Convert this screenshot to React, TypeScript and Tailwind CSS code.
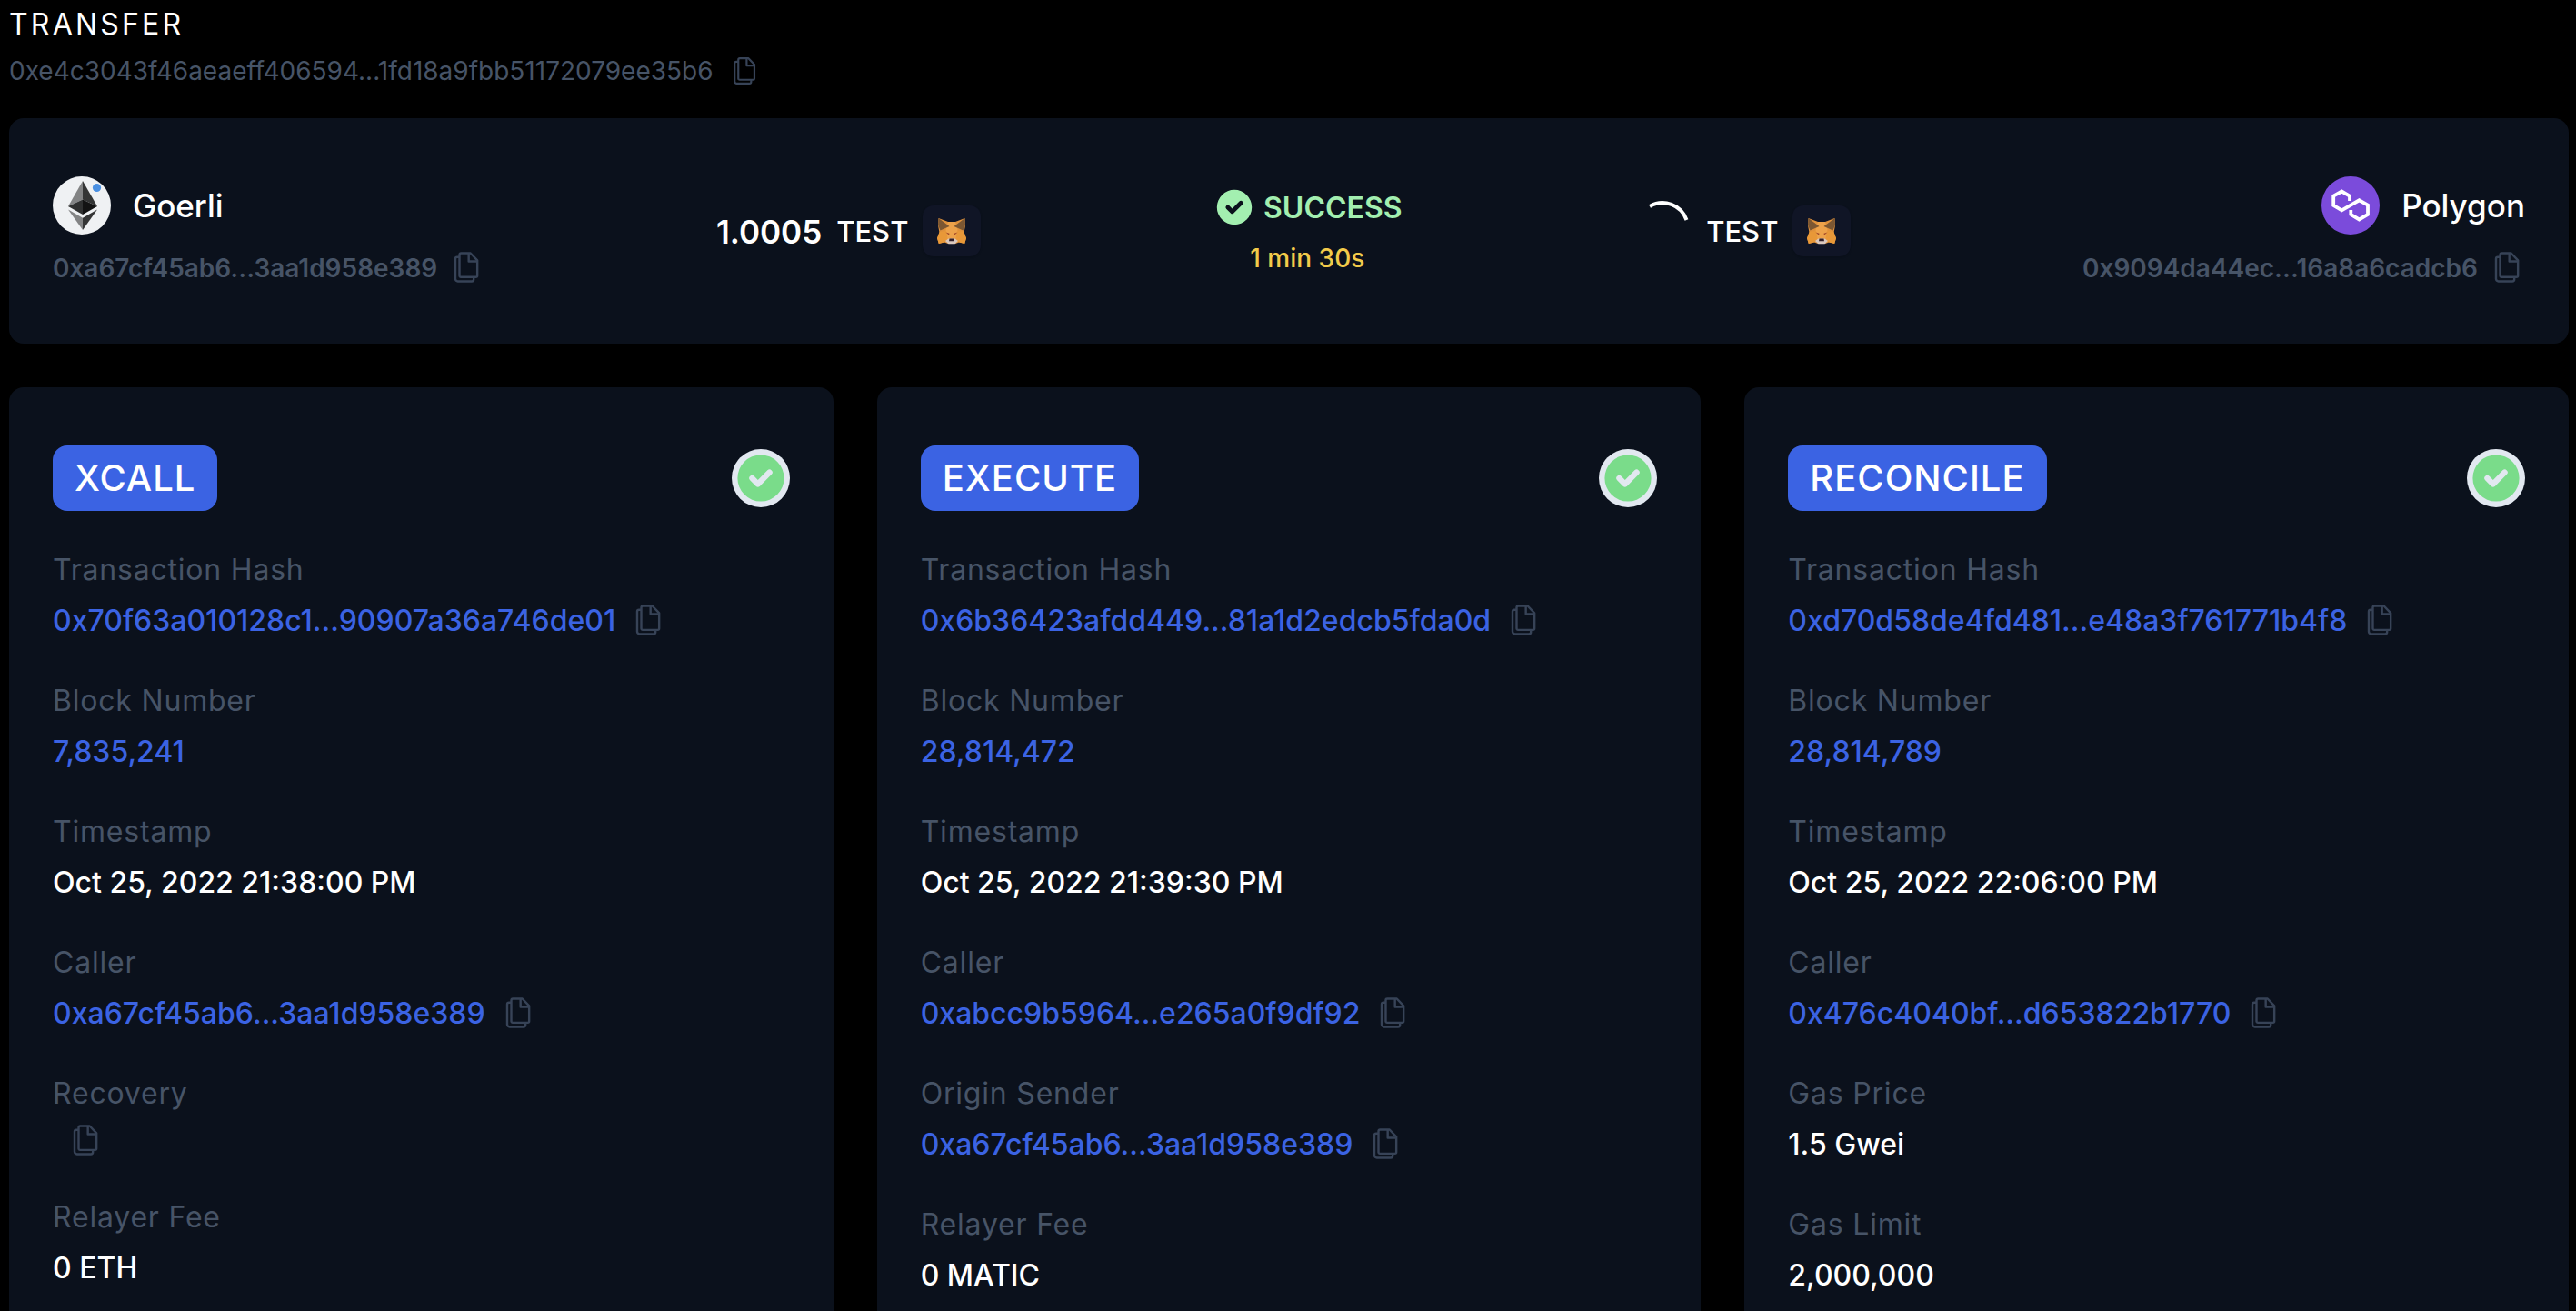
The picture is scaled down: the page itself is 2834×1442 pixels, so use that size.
import { HiCheckCircle } from "react-icons/hi";

type Field = {
  label: string;
  value?: string;
  link?: boolean;
  copy?: boolean;
};

type Step = { title: string; fields: Field[] };

const steps: Step[] = [
  {
    title: "XCALL",
    fields: [
      { label: "Transaction Hash", value: "0x70f63a010128c1...90907a36a746de01", link: true, copy: true },
      { label: "Block Number", value: "7,835,241", link: true },
      { label: "Timestamp", value: "Oct 25, 2022 21:38:00 PM" },
      { label: "Caller", value: "0xa67cf45ab6...3aa1d958e389", link: true, copy: true },
      { label: "Recovery", copy: true },
      { label: "Relayer Fee", value: "0 ETH" },
    ],
  },
  {
    title: "EXECUTE",
    fields: [
      { label: "Transaction Hash", value: "0x6b36423afdd449...81a1d2edcb5fda0d", link: true, copy: true },
      { label: "Block Number", value: "28,814,472", link: true },
      { label: "Timestamp", value: "Oct 25, 2022 21:39:30 PM" },
      { label: "Caller", value: "0xabcc9b5964...e265a0f9df92", link: true, copy: true },
      { label: "Origin Sender", value: "0xa67cf45ab6...3aa1d958e389", link: true, copy: true },
      { label: "Relayer Fee", value: "0 MATIC" },
    ],
  },
  {
    title: "RECONCILE",
    fields: [
      { label: "Transaction Hash", value: "0xd70d58de4fd481...e48a3f761771b4f8", link: true, copy: true },
      { label: "Block Number", value: "28,814,789", link: true },
      { label: "Timestamp", value: "Oct 25, 2022 22:06:00 PM" },
      { label: "Caller", value: "0x476c4040bf...d653822b1770", link: true, copy: true },
      { label: "Gas Price", value: "1.5 Gwei" },
      { label: "Gas Limit", value: "2,000,000" },
    ],
  },
];

function CopyButton({ small = false }: { small?: boolean }) {
  return (
    <button type="button" aria-label="Copy" className="shrink-0 cursor-pointer text-[#374357]">
      <svg
        viewBox="0 0 24 24"
        className={small ? "size-9" : "size-10"}
        fill="none"
        stroke="currentColor"
        strokeWidth="1.45"
        strokeLinejoin="round"
      >
        <path d="M8.6 2.7h6.2l4.5 4.7v10.2a.9.9 0 0 1-.9.9H8.4a.9.9 0 0 1-.9-.9V3.8a1.1 1.1 0 0 1 1.1-1.1z" />
        <path d="M13.6 2.7v5.4h5.7" />
        <path d="M7.3 5.2H6a1.2 1.2 0 0 0-1.2 1.2v13.3A1.600 1.600 0 0 0 6.400 21.300h9.200a1.300 1.300 0 0 0 1.300-1.300v-1.300" />
      </svg>
    </button>
  );
}

function GoerliLogo() {
  return (
    <svg viewBox="0 0 64 64" className="size-16" aria-hidden="true">
      <circle cx="32" cy="32" r="32" fill="#eff1f3" />
      <path d="M33 5v20.5L17 33z" fill="#828384" />
      <path d="M33 5v20.5L49 33z" fill="#343535" />
      <path d="M33 25.5V42L17 33z" fill="#2f3030" />
      <path d="M33 25.5V42l16-9z" fill="#131313" />
      <path d="M17 36.5l16 9.3V59z" fill="#828384" />
      <path d="M49 36.5l-16 9.3V59z" fill="#343535" />
      <circle cx="48.5" cy="12.5" r="4.6" fill="#4a90e2" />
    </svg>
  );
}

function PolygonLogo() {
  return (
    <svg viewBox="0 0 64 64" className="size-16" aria-hidden="true">
      <circle cx="32" cy="32" r="32" fill="#7b4bdb" />
      <path
        d="M31 27v-5.3L22.300 16.500L13.200 21.700V32L22.300 37.300L41.500 26.300L51 31.700V42L41.500 47.500L32.300 42V37"
        fill="none"
        stroke="#fff"
        strokeWidth="3.8"
      />
    </svg>
  );
}

function FoxLogo() {
  return (
    <svg viewBox="0 0 32 32" className="size-8" aria-hidden="true">
      <path d="M1.500 2L12 6h8l10.500-4L31 10l-1.500 8 2.500 6-1.800 6-6-1.500L20 30h-8l-4.200-1.500-6 1.500L0 24l2.500-6L1 10z" fill="#e0923c" />
      <path d="M12 6h8l2.500 9-1.500 13H11L9.500 15z" fill="#eda24a" />
      <path d="M0 24l2.500-7L10 16l1.500 8.500-3.700 4-6 1.500zM32 24l-2.500-7L22 16l-1.500 8.500 3.700 4 6 1.500z" fill="#e89838" />
      <path d="M1.500 2L13.500 11 3.500 15.500 1 9.500zM30.500 2L18.500 11l10 4.500L31 9.500z" fill="#7c5732" />
      <path d="M9.500 17.500l4 1.200-.5 2zM22.500 17.500l-4 1.200.5 2z" fill="#a34a28" />
      <path d="M9 27l3.500-2.500h7L23 27l-3.500 3.200h-7z" fill="#d9c8bf" />
      <path d="M13.500 24.500h5l.5 2.800h-6z" fill="#33202a" />
    </svg>
  );
}

function Chain({ logo, name, address, end = false }: { logo: React.ReactNode; name: string; address: string; end?: boolean }) {
  return (
    <div className={end ? "flex flex-col items-end gap-4" : "flex flex-col items-start gap-4"}>
      <div className="flex items-center gap-6">
        {logo}
        <span className="text-[35px] leading-14 font-medium">{name}</span>
      </div>
      <div className="flex items-center gap-3 text-[28px] font-semibold text-[#475467]">
        <span className="pt-0.5 leading-[38px]">{address}</span>
        <CopyButton />
      </div>
    </div>
  );
}

function Token() {
  return (
    <>
      <span className="pt-0.5 text-[31px] leading-[46px] font-medium">TEST</span>
      <span className="rounded-xl bg-[#101526] px-4 py-3 shadow">
        <FoxLogo />
      </span>
    </>
  );
}

function FieldRow({ label, value, link, copy }: Field) {
  return (
    <div className="flex flex-col gap-2">
      <dt className="pt-0.5 text-[32px] leading-[46px] tracking-wide text-[#475467]">{label}</dt>
      <dd className="flex items-center text-[32px] font-medium">
        {value && link && (
          <a href="#" className="pt-0.5 leading-[46px] text-[#3b63e3]">
            {value}
          </a>
        )}
        {value && !link && <span className="pt-0.5 leading-[46px]">{value}</span>}
        {copy && (
          <span className="ml-4 flex">
            <CopyButton />
          </span>
        )}
      </dd>
    </div>
  );
}

export default function App() {
  return (
    <main className="h-screen overflow-hidden bg-black pt-0.5 pr-2 pl-2.5 font-['Inter',sans-serif] whitespace-nowrap text-white">
      <header className="flex flex-col gap-2">
        <h1 className="pt-0.5 text-[32px] leading-[46px] tracking-widest">TRANSFER</h1>
        <div className="flex items-center gap-4 text-[28px] leading-10 text-[#475467]">
          <span>0xe4c3043f46aeaeff406594...1fd18a9fbb51172079ee35b6</span>
          <CopyButton small />
        </div>
      </header>

      <section className="mt-8 flex items-center justify-between rounded-2xl bg-[#0b111c] px-12 py-16">
        <Chain logo={<GoerliLogo />} name="Goerli" address="0xa67cf45ab6...3aa1d958e389" />
        <div className="flex items-center gap-4">
          <span className="pt-0.5 text-[35px] leading-14 font-semibold">1.0005</span>
          <Token />
        </div>
        <div className="flex flex-col items-center gap-3">
          <div className="flex items-center gap-2 text-[32px] font-semibold text-[#a3efb0]">
            <HiCheckCircle className="size-12" />
            <span className="pt-0.5 leading-[46px]">SUCCESS</span>
          </div>
          <span className="text-[28px] leading-10 font-medium text-[#f2cb4a]">1 min 30s</span>
        </div>
        <div className="flex items-center gap-4">
          <svg viewBox="0 0 64 64" className="size-16 overflow-visible" fill="none" stroke="#fff" strokeWidth="4" role="img" aria-label="Loading">
            <path d="M18 5A28 28 0 0 1 58.500 20" />
          </svg>
          <Token />
        </div>
        <Chain logo={<PolygonLogo />} name="Polygon" address="0x9094da44ec...16a8a6cadcb6" end />
      </section>

      <div className="mt-12 grid grid-cols-3 gap-12">
        {steps.map((step) => (
          <section key={step.title} className="rounded-2xl bg-[#0b111c] px-12 py-16">
            <div className="flex items-center justify-between">
              <h2 className="rounded-2xl bg-[#3b63e3] px-6 py-2 text-[40px] leading-14 font-medium tracking-wide">{step.title}</h2>
              <span className="rounded-full bg-[#e2e8f0] text-[#7adc8a]">
                <HiCheckCircle className="size-16" />
              </span>
            </div>
            <dl className="mt-10 flex flex-col gap-10">
              {step.fields.map((field) => (
                <FieldRow key={field.label} {...field} />
              ))}
            </dl>
          </section>
        ))}
      </div>
    </main>
  );
}
